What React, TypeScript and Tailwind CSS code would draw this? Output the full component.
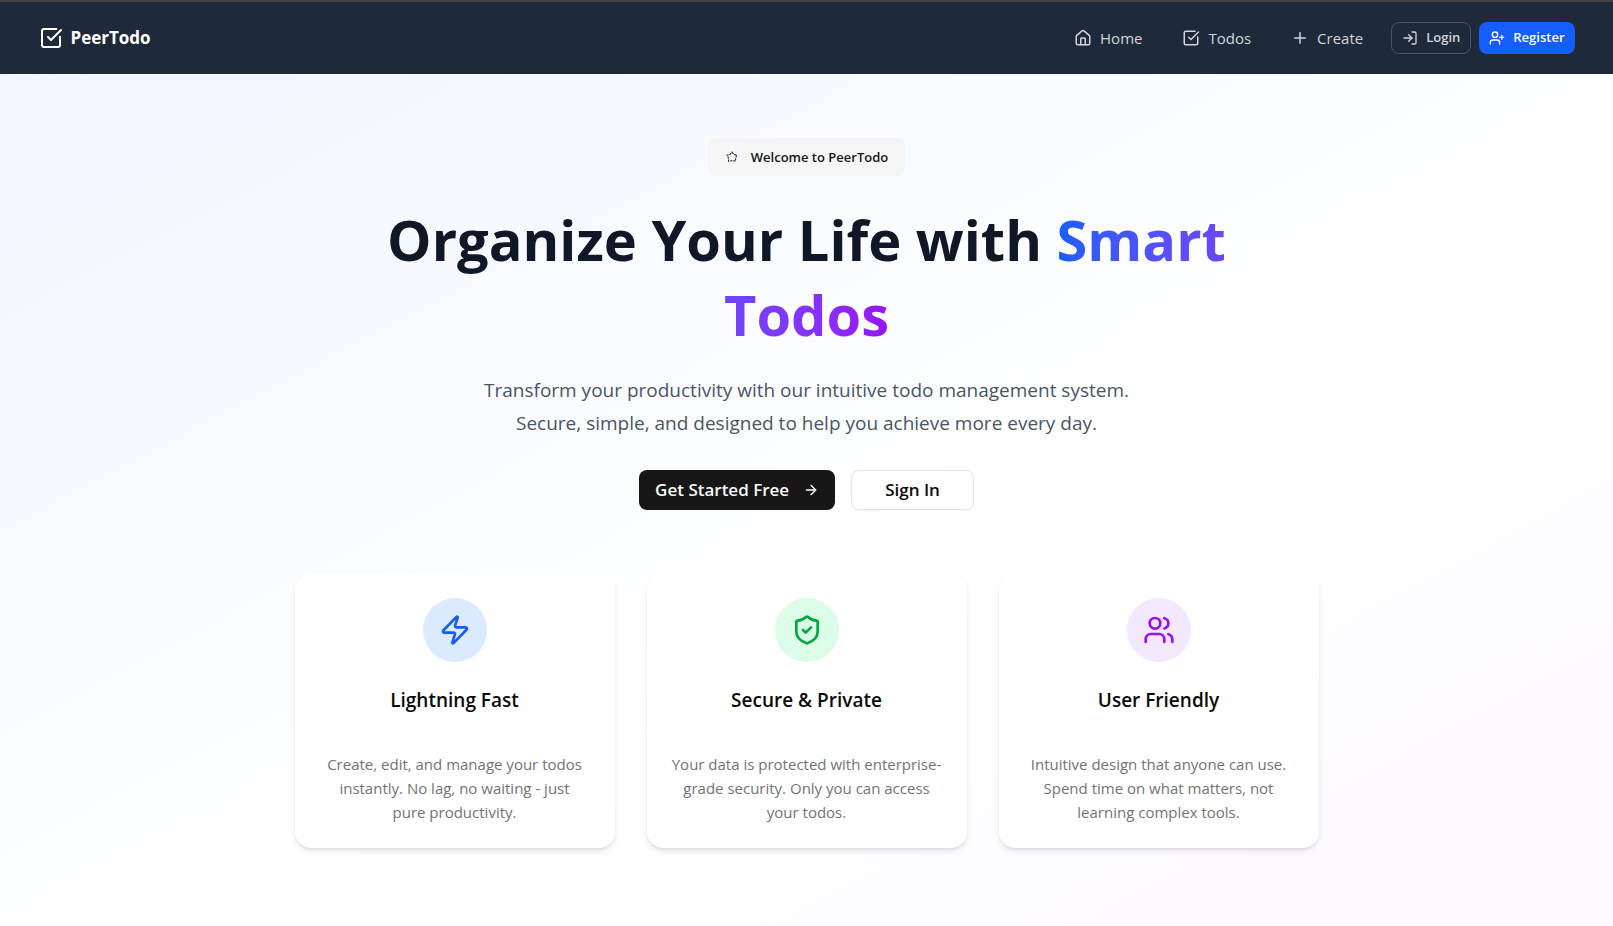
import React from "react";
import { ArrowRight, House, LogIn, Plus, ShieldCheck, SquareCheckBig, UserPlus, Users, Zap } from "lucide-react";

const navLinks = [
  { label: "Home", Icon: House },
  { label: "Todos", Icon: SquareCheckBig },
  { label: "Create", Icon: Plus },
];

const features = [
  {
    title: "Lightning Fast",
    text: "Create, edit, and manage your todos instantly. No lag, no waiting - just pure\u00a0productivity.",
    Icon: Zap,
    circle: "bg-blue-100 text-blue-600",
  },
  {
    title: "Secure & Private",
    text: "Your data is protected with enterprise-grade security. Only you can access your todos.",
    Icon: ShieldCheck,
    circle: "bg-green-100 text-green-600",
  },
  {
    title: "User Friendly",
    text: "Intuitive design that anyone can use. Spend time on what matters, not learning complex tools.",
    Icon: Users,
    circle: "bg-purple-100 text-purple-600",
  },
];

function StarBadgeIcon() {
  return (
    <svg
      viewBox="0 0 16 16"
      className="size-4 text-neutral-700"
      fill="none"
      stroke="currentColor"
      strokeWidth="1.2"
      strokeDasharray="2.4 0.7"
      aria-hidden="true"
    >
      <path d="M7 3.2 8.9 5.4 11.9 6.2 10.6 8.9 10.4 12.2 7 11.6 3.6 12.2 3.4 8.9 2.1 6.2 5.1 5.4Z" />
    </svg>
  );
}

function Navbar() {
  return (
    <header className="border-t-2 border-[#414146] bg-gray-800">
      <nav className="mx-auto flex h-18 max-w-[1536px] items-center justify-between">
        <a href="#" className="flex items-center gap-2 text-[17px] font-bold text-white">
          <SquareCheckBig className="size-6" />
          PeerTodo
        </a>
        <div className="flex items-center gap-3">
          <div className="flex items-center gap-2">
            {navLinks.map(({ label, Icon }) => (
              <a key={label} href="#" className="flex items-center gap-2 px-4 text-[15px] text-gray-300">
                <Icon className="size-[18px]" />
                {label}
              </a>
            ))}
          </div>
          <div className="flex items-center gap-2">
            <button className="flex h-8 items-center gap-2 rounded-lg border border-gray-600 px-[10px] text-[13px] font-semibold text-gray-300">
              <LogIn className="size-4" />
              Login
            </button>
            <button className="flex h-8 items-center gap-2 rounded-lg bg-blue-600 px-[10px] text-[13px] font-semibold text-white">
              <UserPlus className="size-4" />
              Register
            </button>
          </div>
        </div>
      </nav>
    </header>
  );
}

export default function App() {
  return (
    <div className="flex min-h-screen flex-col font-['Open_Sans','Noto_Sans',sans-serif]">
      <Navbar />
      <main className="flex grow flex-col items-center bg-linear-to-br from-blue-50 via-white via-55% to-purple-50 to-[130%] px-4 pt-16 pb-16">
        <div className="flex items-center gap-[10px] rounded-lg bg-neutral-100 px-[17px] py-2 text-[13px]/[22px] font-semibold text-neutral-900">
          <StarBadgeIcon />
          Welcome to PeerTodo
        </div>
        <h1 className="mt-[26px] max-w-4xl text-center text-[56px]/[75px] font-bold text-gray-900">
          Organize Your Life with{" "}
          <span className="bg-linear-to-r from-blue-600 to-purple-600 bg-clip-text text-transparent">Smart Todos</span>
        </h1>
        <p className="mt-[22px] max-w-2xl text-center text-[19px]/[33px] text-gray-600">
          Transform your productivity with our intuitive todo management system. Secure, simple, and designed to help you achieve more every day.
        </p>
        <div className="mt-[30px] flex gap-4">
          <button className="flex h-10 items-center gap-[14px] rounded-lg bg-neutral-900 px-4 text-[17px] font-semibold text-neutral-50">
            Get Started Free
            <ArrowRight className="size-4" />
          </button>
          <button className="h-10 rounded-lg border border-neutral-200 bg-white px-[33px] text-[17px] font-semibold text-neutral-950 shadow-xs">
            Sign In
          </button>
        </div>
        <section className="mt-16 grid w-full max-w-5xl grid-cols-3 gap-8">
          {features.map(({ title, text, Icon, circle }) => (
            <article key={title} className="flex flex-col items-center rounded-2xl bg-white p-6 text-center shadow-md">
              <div className={`flex size-16 items-center justify-center rounded-full ${circle}`}>
                <Icon className="size-8" />
              </div>
              <h2 className="mt-6 text-[19px]/7 font-semibold text-neutral-950">{title}</h2>
              <p className="mt-[38px] text-[15px]/6 text-neutral-500">{text}</p>
            </article>
          ))}
        </section>
      </main>
    </div>
  );
}
